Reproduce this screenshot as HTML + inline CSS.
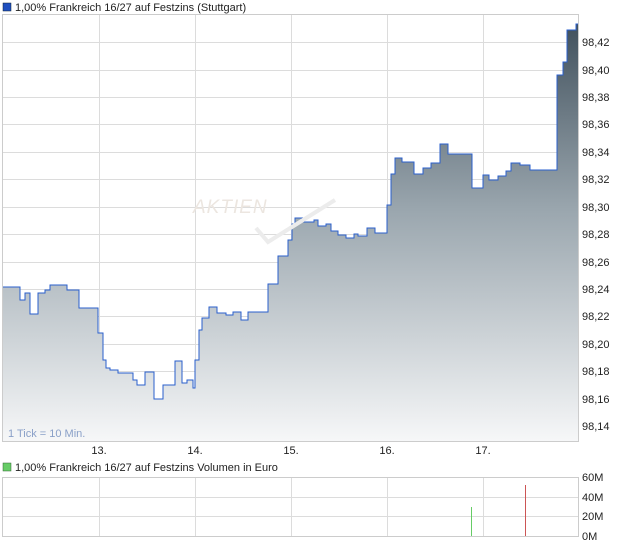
<html><head><style>
body{margin:0;background:#fff;font-family:"Liberation Sans",sans-serif;}
text{font-family:"Liberation Sans",sans-serif;font-size:11px;fill:#222;}
</style></head><body>
<svg width="620" height="546" xmlns="http://www.w3.org/2000/svg">
<defs>
<linearGradient id="f" x1="0" y1="20" x2="0" y2="441" gradientUnits="userSpaceOnUse">
<stop offset="0" stop-color="#3f4f5b"/><stop offset="0.45" stop-color="#9aa6ae"/><stop offset="1" stop-color="#f6f7f8"/></linearGradient></defs>
<rect x="3" y="3" width="8" height="8" fill="#1f4fbf" stroke="#123" stroke-width="0.5"/>
<text x="15" y="11">1,00% Frankreich 16/27 auf Festzins (Stuttgart)</text>
<g stroke="#dcdcdc" stroke-width="1">
<line x1="99.5" y1="15" x2="99.5" y2="441"/><line x1="195.5" y1="15" x2="195.5" y2="441"/><line x1="291.5" y1="15" x2="291.5" y2="441"/><line x1="387.5" y1="15" x2="387.5" y2="441"/><line x1="483.5" y1="15" x2="483.5" y2="441"/>
<line x1="3" y1="42.5" x2="578" y2="42.5"/><line x1="3" y1="70.5" x2="578" y2="70.5"/><line x1="3" y1="97.5" x2="578" y2="97.5"/><line x1="3" y1="124.5" x2="578" y2="124.5"/><line x1="3" y1="152.5" x2="578" y2="152.5"/><line x1="3" y1="179.5" x2="578" y2="179.5"/><line x1="3" y1="207.5" x2="578" y2="207.5"/><line x1="3" y1="234.5" x2="578" y2="234.5"/><line x1="3" y1="262.5" x2="578" y2="262.5"/><line x1="3" y1="289.5" x2="578" y2="289.5"/><line x1="3" y1="316.5" x2="578" y2="316.5"/><line x1="3" y1="344.5" x2="578" y2="344.5"/><line x1="3" y1="371.5" x2="578" y2="371.5"/><line x1="3" y1="399.5" x2="578" y2="399.5"/><line x1="3" y1="426.5" x2="578" y2="426.5"/>
</g>
<polygon fill="url(#f)" points="3,441 3,287 20,287 20,300 25,300 25,293 30,293 30,314 38,314 38,293 45,293 45,290 50,290 50,285 67,285 67,290 79,290 79,308 98,308 98,333 103,333 103,360 106,360 106,368 110,368 110,370 118,370 118,373 133,373 133,380 137,380 137,385 145,385 145,372 154,372 154,399 163,399 163,385 175,385 175,361 182,361 182,383 187,383 187,380 193,380 193,388 195,388 195,360 199,360 199,330 202,330 202,318 209,318 209,307 217,307 217,313 226,313 226,315 233,315 233,312 241,312 241,320 248,320 248,312 268,312 268,284 278,284 278,256 288,256 288,240 292,240 292,224 295,224 295,218 303,218 303,222 314,222 314,220 318,220 318,226 326,226 326,224 331,224 331,231 338,231 338,235 346,235 346,238 354,238 354,234 358,234 358,236 367,236 367,228 375,228 375,233 387,233 387,205 391,205 391,174 395,174 395,158 402,158 402,162 414,162 414,174 423,174 423,168 431,168 431,163 440,163 440,144 448,144 448,154 472,154 472,188 483,188 483,175 489,175 489,180 498,180 498,176 506,176 506,171 511,171 511,163 520,163 520,165 530,165 530,170 557,170 557,75 563,75 563,62 567,62 567,30 576,30 576,24 578,24 578,441"/>
<polyline fill="none" stroke="#2a5fcc" stroke-width="1" points="3,287 20,287 20,300 25,300 25,293 30,293 30,314 38,314 38,293 45,293 45,290 50,290 50,285 67,285 67,290 79,290 79,308 98,308 98,333 103,333 103,360 106,360 106,368 110,368 110,370 118,370 118,373 133,373 133,380 137,380 137,385 145,385 145,372 154,372 154,399 163,399 163,385 175,385 175,361 182,361 182,383 187,383 187,380 193,380 193,388 195,388 195,360 199,360 199,330 202,330 202,318 209,318 209,307 217,307 217,313 226,313 226,315 233,315 233,312 241,312 241,320 248,320 248,312 268,312 268,284 278,284 278,256 288,256 288,240 292,240 292,224 295,224 295,218 303,218 303,222 314,222 314,220 318,220 318,226 326,226 326,224 331,224 331,231 338,231 338,235 346,235 346,238 354,238 354,234 358,234 358,236 367,236 367,228 375,228 375,233 387,233 387,205 391,205 391,174 395,174 395,158 402,158 402,162 414,162 414,174 423,174 423,168 431,168 431,163 440,163 440,144 448,144 448,154 472,154 472,188 483,188 483,175 489,175 489,180 498,180 498,176 506,176 506,171 511,171 511,163 520,163 520,165 530,165 530,170 557,170 557,75 563,75 563,62 567,62 567,30 576,30 576,24 578,24"/>
<text x="193" y="213" style="font-size:19px;fill:#ece6e0;font-style:italic;letter-spacing:1px">AKTIEN</text>
<path d="M256 228 L268 242 L335 200" fill="none" stroke="#ececec" stroke-width="4"/>
<rect x="2.5" y="14.5" width="576" height="427" fill="none" stroke="#ccc"/>
<text x="582" y="46">98,42</text><text x="582" y="74">98,40</text><text x="582" y="101">98,38</text><text x="582" y="128">98,36</text><text x="582" y="156">98,34</text><text x="582" y="183">98,32</text><text x="582" y="211">98,30</text><text x="582" y="238">98,28</text><text x="582" y="266">98,26</text><text x="582" y="293">98,24</text><text x="582" y="320">98,22</text><text x="582" y="348">98,20</text><text x="582" y="375">98,18</text><text x="582" y="403">98,16</text><text x="582" y="430">98,14</text>
<text x="8" y="437" style="fill:#8aa0c8">1 Tick = 10 Min.</text>
<g text-anchor="middle"><text x="99" y="454">13.</text><text x="195" y="454">14.</text><text x="291" y="454">15.</text><text x="387" y="454">16.</text><text x="483" y="454">17.</text></g>
<rect x="3" y="463" width="8" height="8" fill="#6c6" stroke="#363" stroke-width="0.5"/>
<text x="15" y="471">1,00% Frankreich 16/27 auf Festzins Volumen in Euro</text>
<g stroke="#dcdcdc"><line x1="3" y1="497.5" x2="578" y2="497.5"/><line x1="3" y1="516.5" x2="578" y2="516.5"/>
<line x1="99.5" y1="478" x2="99.5" y2="536"/><line x1="195.5" y1="478" x2="195.5" y2="536"/><line x1="291.5" y1="478" x2="291.5" y2="536"/><line x1="387.5" y1="478" x2="387.5" y2="536"/><line x1="483.5" y1="478" x2="483.5" y2="536"/></g>
<rect x="471" y="507" width="1" height="29" fill="#66cc66"/>
<rect x="525" y="485" width="1" height="51" fill="#cc5555"/>
<rect x="2.5" y="477.5" width="576" height="59" fill="none" stroke="#ccc"/>
<text x="582" y="481">60M</text><text x="582" y="501">40M</text><text x="582" y="520">20M</text><text x="582" y="540">0M</text>
</svg>
</body></html>
